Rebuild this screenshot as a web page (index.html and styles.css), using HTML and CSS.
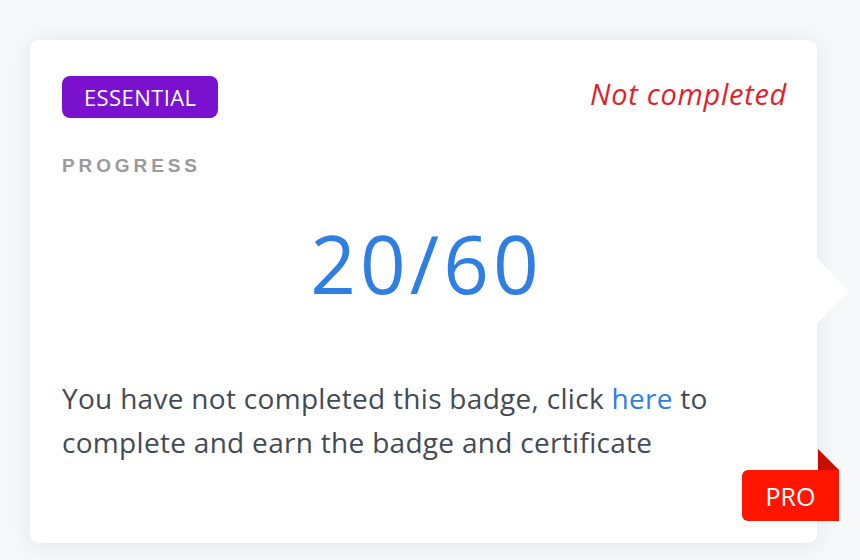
FILE: index.html
```html
<!DOCTYPE html>
<html>
<head>
<meta charset="utf-8">
<link rel="stylesheet" href="styles.css">
</head>
<body>
<div class="page">
  <div class="card">
    <div class="card-head">
      <span class="tag">ESSENTIAL</span>
      <span class="status">Not completed</span>
    </div>
    <div class="label">PROGRESS</div>
    <div class="count">20/60</div>
    <p class="desc">You have not completed this badge, click <a href="#" class="link">here</a> to complete and earn the badge and certificate</p>
    <div class="pointer"></div>
    <div class="ribbon"><span class="ribbon-fold"></span>PRO</div>
  </div>
</div>
</body>
</html>
```
FILE: styles.css
```css
html, body {
  margin: 0;
  padding: 0;
  background: #f7f8fa;
  width: 860px;
  height: 560px;
  overflow: hidden;
}
.page {
  padding: 40px 43px 17px 30px;
  box-sizing: border-box;
  height: 560px;
  display: flex;
}
.card {
  position: relative;
  flex: 1;
  background: #fff;
  border-radius: 9px;
  box-shadow: 0 2px 26px rgba(20, 30, 50, 0.09);
  padding: 36px 30px 0 32px;
  font-family: "Open Sans", "Noto Sans", sans-serif;
}
.card-head {
  display: flex;
  justify-content: space-between;
  align-items: center;
}
.tag {
  display: inline-flex;
  align-items: center;
  height: 42px;
  padding: 0 22px 0 22px;
  background: #7a11cf;
  color: #fff;
  border-radius: 8px;
  font-size: 22px;
  letter-spacing: 0.4px;
}
.status {
  color: #e41e2b;
  font-style: italic;
  font-size: 29px;
  letter-spacing: 0.7px;
  margin-top: -8px;
}
.label {
  margin-top: 37px;
  font-family: "Liberation Sans", Arial, sans-serif;
  font-weight: bold;
  font-size: 19px;
  letter-spacing: 3.9px;
  color: #9a9a9a;
}
.count {
  margin-top: 36px;
  padding-left: 4px;
  text-align: center;
  font-size: 80px;
  line-height: 100px;
  letter-spacing: 4px;
  color: #2f7fe3;
}
.desc {
  margin: 63px 0 0;
  font-size: 28px;
  line-height: 44px;
  letter-spacing: 0.3px;
  color: #434a54;
}
.link {
  color: #2f7fe3;
  text-decoration: none;
}
.pointer {
  position: absolute;
  right: -32px;
  top: 218px;
  width: 0;
  height: 0;
  border-top: 33px solid transparent;
  border-bottom: 33px solid transparent;
  border-left: 32px solid #fff;
}
.ribbon {
  position: absolute;
  right: -22px;
  bottom: 22px;
  width: 97px;
  height: 51px;
  background: #ff1500;
  color: #fff;
  border-radius: 6px 0 0 6px;
  display: flex;
  align-items: center;
  justify-content: center;
  font-size: 25px;
}
.ribbon-fold {
  position: absolute;
  right: 0;
  top: -21px;
  width: 0;
  height: 0;
  border-bottom: 21px solid #c71000;
  border-right: 21px solid transparent;
}
```
